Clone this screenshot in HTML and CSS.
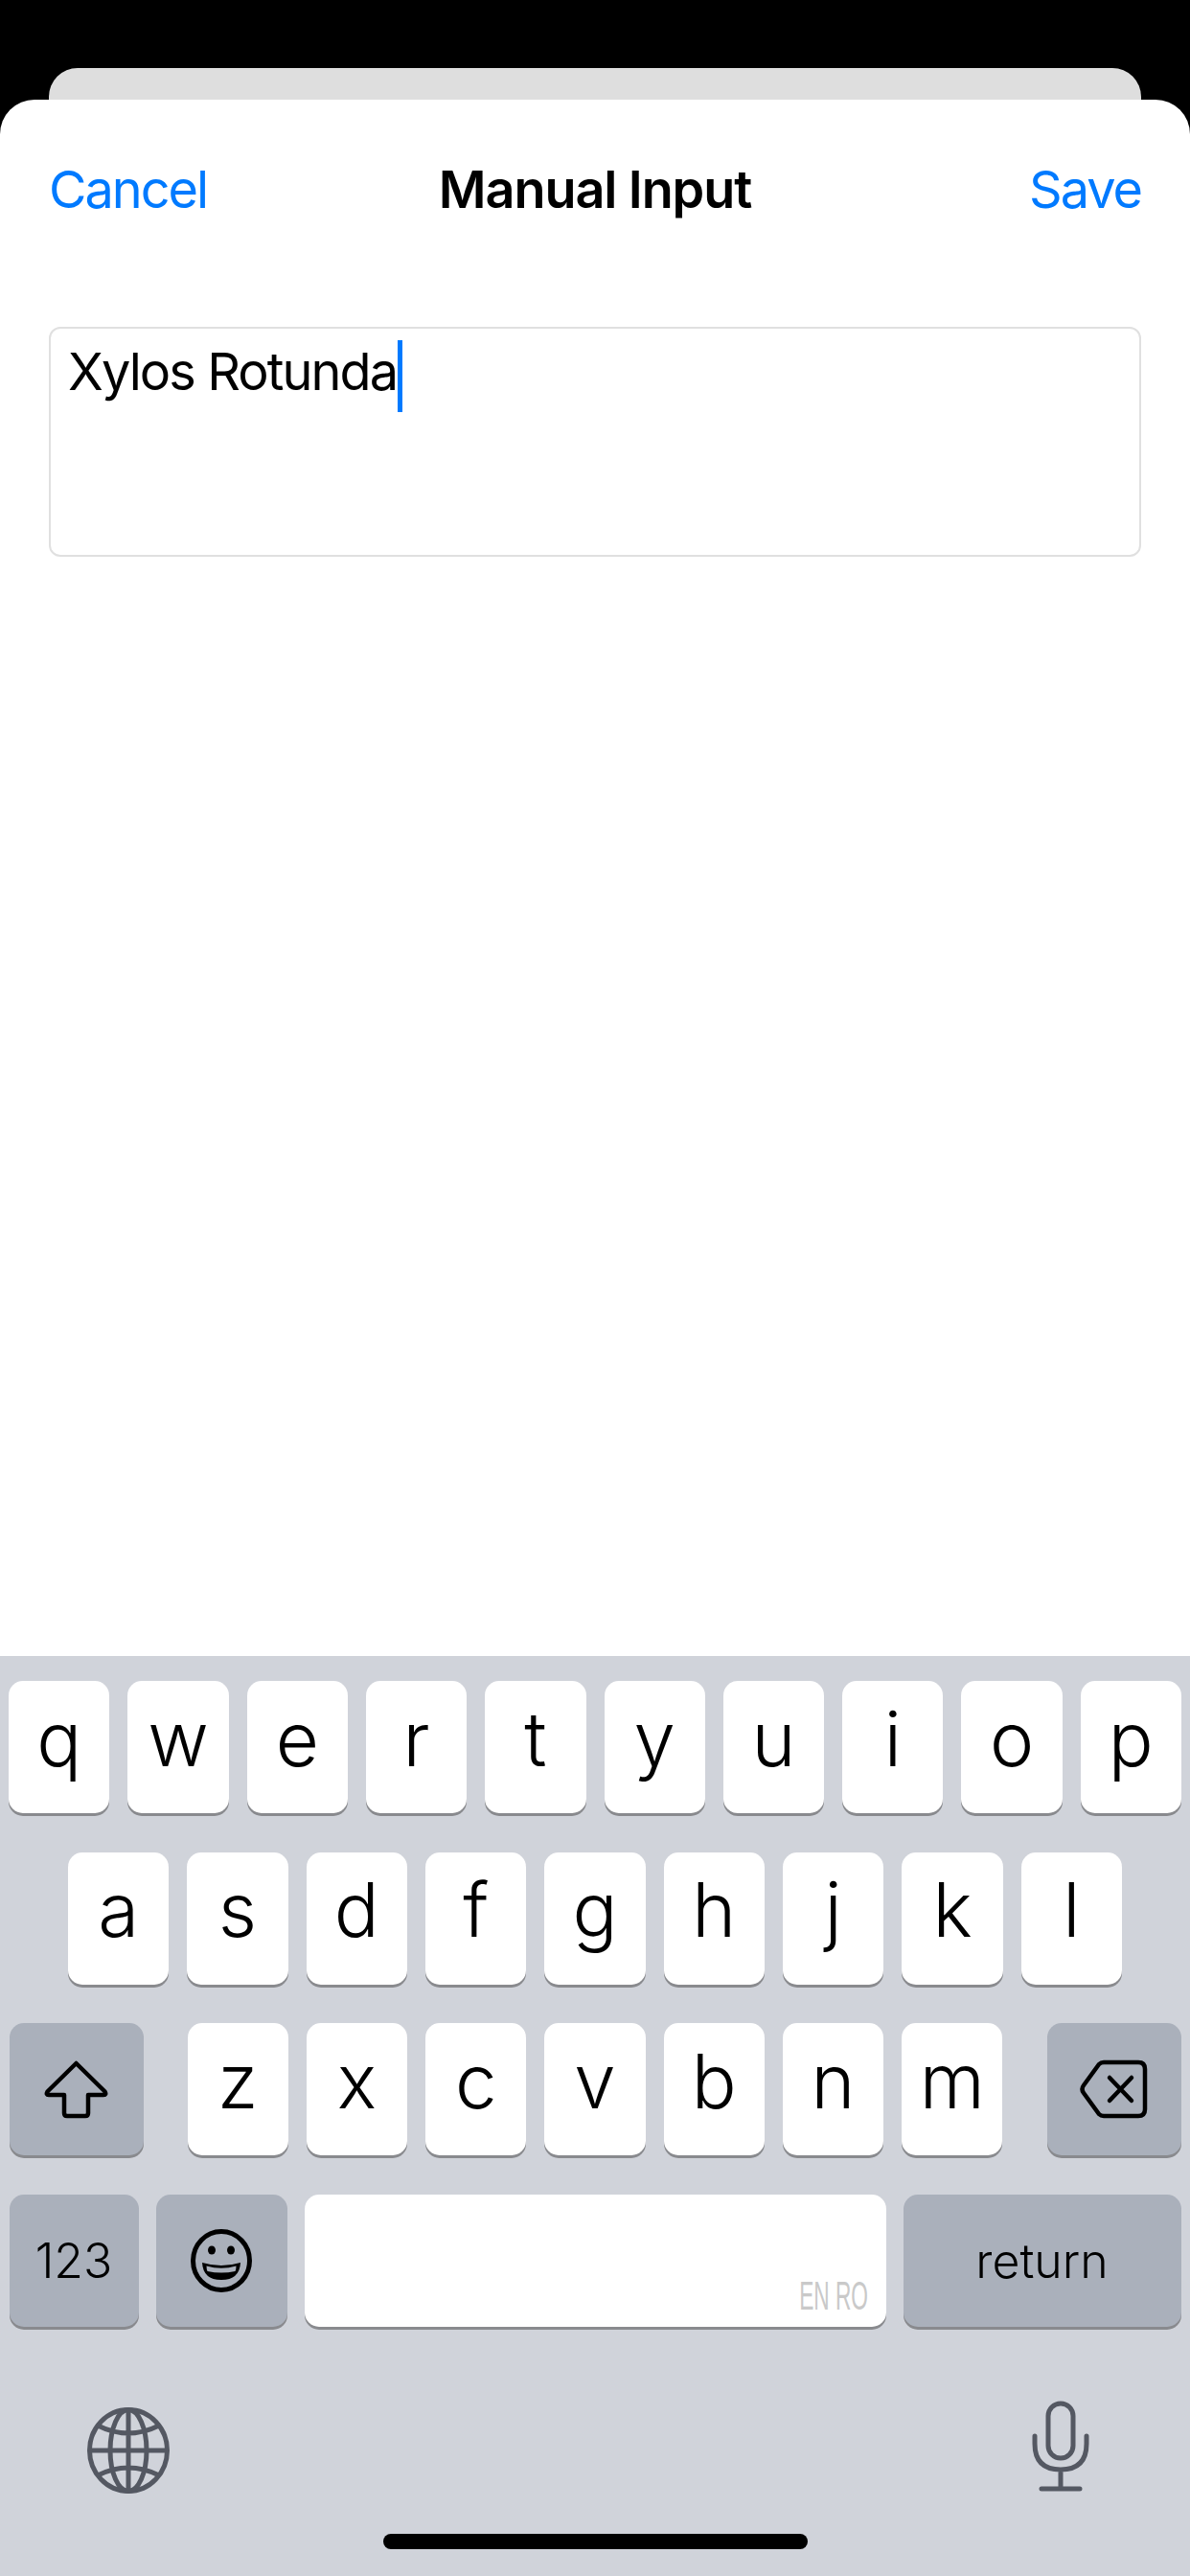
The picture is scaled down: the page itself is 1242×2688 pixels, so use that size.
FILE: index.html
```html
<!DOCTYPE html>
<html lang="en">
<head>
  <meta charset="UTF-8">
  <meta name="viewport" content="width=device-width, initial-scale=1.0">
  <title>Manual Input</title>
  <link rel="stylesheet" href="styles.css">
</head>
<body>

<div class="sheet-behind"></div>

<div class="sheet">
  <div class="nav">
    <a href="#" class="nav-cancel">Cancel</a>
    <h1>Manual Input</h1>
    <a href="#" class="nav-save">Save</a>
  </div>
  <div class="field">Xylos Rotunda<span class="caret"></span></div>
</div>

<div class="keyboard">
  <div class="row row-top">
    <div class="key">q</div><div class="key">w</div><div class="key">e</div><div class="key">r</div><div class="key">t</div>
    <div class="key">y</div><div class="key">u</div><div class="key">i</div><div class="key">o</div><div class="key">p</div>
  </div>
  <div class="row row-home">
    <div class="key">a</div><div class="key">s</div><div class="key">d</div><div class="key">f</div><div class="key">g</div>
    <div class="key">h</div><div class="key">j</div><div class="key">k</div><div class="key">l</div>
  </div>
  <div class="row row-shift">
    <div class="key key-dark">
      <svg width="67" height="61" viewBox="0 0 67 61"><path d="M33.5 3 L63.5 32.5 Q65.5 36 62 36 H46 V55 Q46 58 43 58 H24 Q21 58 21 55 V36 H5 Q1.5 36 3.5 32.5 Z" fill="none" stroke="#000" stroke-width="4.5" stroke-linejoin="round"/></svg>
    </div>
    <div class="letters">
      <div class="key">z</div><div class="key">x</div><div class="key">c</div><div class="key">v</div>
      <div class="key">b</div><div class="key">n</div><div class="key">m</div>
    </div>
    <div class="key key-dark">
      <svg width="71" height="62" viewBox="0 0 71 62"><path d="M25 3 H61 Q68 3 68 10 V52 Q68 59 61 59 H25 Q22 59 20 57 L4 35 Q1 31 4 27 L20 5 Q22 3 25 3 Z" fill="none" stroke="#000" stroke-width="4.5" stroke-linejoin="round"/><path d="M31 19 L54 43 M54 19 L31 43" fill="none" stroke="#000" stroke-width="4.5" stroke-linecap="round"/></svg>
    </div>
  </div>
  <div class="row row-bottom">
    <div class="key key-dark key-123">123</div>
    <div class="key key-dark key-emoji">
      <svg width="64" height="66" viewBox="0 0 64 66">
        <ellipse cx="32" cy="33" rx="29.5" ry="30.5" fill="none" stroke="#000" stroke-width="5"/>
        <ellipse cx="22" cy="22" rx="4" ry="4.5"/>
        <ellipse cx="42" cy="22" rx="4" ry="4.5"/>
        <path d="M12 35 Q32 41 52 35 Q51 53 32 53 Q13 53 12 35 Z"/>
        <path d="M16.5 38.5 Q32 43 47.5 38.5 Q47.5 42 46.5 44 Q32 47 17.5 44 Q16.5 42 16.5 38.5 Z" fill="#aab0bb"/>
      </svg>
    </div>
    <div class="key key-space"><span class="lang">EN RO</span></div>
    <div class="key key-dark key-return">return</div>
  </div>
  <div class="kb-bottom">
    <svg class="globe" width="86" height="90" viewBox="0 0 86 90" fill="none" stroke="#545862" stroke-width="5">
      <ellipse cx="43" cy="45" rx="40.5" ry="42.5"/>
      <ellipse cx="43" cy="45" rx="19" ry="42.5"/>
      <path d="M43 2.5 V87.5 M2.5 45 H83.5 M11 19 Q43 35 75 19 M11 71 Q43 55 75 71"/>
    </svg>
    <svg class="mic" width="60" height="96" viewBox="0 0 60 96" fill="none" stroke="#545862" stroke-width="5" stroke-linecap="round">
      <rect x="17" y="3" width="26" height="57" rx="13"/>
      <path d="M3 37 V45 Q3 72 30 72 Q57 72 57 45 V37 M30 72 V90 M10 92 H50"/>
    </svg>
  </div>
  <div class="home-bar"></div>
</div>

</body>
</html>
```

FILE: styles.css
```css
:root {
  --blue: #007aff;
  --kb-bg: #d0d3da;
  --key-dark: #aab0bb;
  --key-shadow: #898a8e;
}

body {
  font-family: Inter, 'Noto Sans', Arial, sans-serif;
  margin: 0;
  width: 1242px;
  height: 2688px;
  background: #000;
  display: flex;
  flex-direction: column;
  overflow: hidden;
}

.sheet-behind {
  margin: 71px 51px 0;
  height: 33px;
  flex: none;
  background: #dedede;
  border-radius: 30px 30px 0 0;
}

.sheet {
  flex: 1;
  background: #fff;
  border-radius: 36px 36px 0 0;
  padding: 0 51px;
}

.nav {
  display: grid;
  grid-template-columns: 1fr auto 1fr;
  align-items: center;
  padding-top: 63px;
  height: 62px;
  line-height: 62px;
  font-size: 54px;
  letter-spacing: -2px;
}

.nav a {
  color: var(--blue);
  text-decoration: none;
}

.nav h1 {
  margin: 0;
  font-size: 54px;
  font-weight: 600;
  letter-spacing: -1.1px;
  color: #000;
}

.nav-save {
  justify-self: end;
}

.field {
  box-sizing: border-box;
  margin-top: 112px;
  height: 240px;
  border: 2px solid #e0e0e0;
  border-radius: 12px;
  padding: 9px 18px 0;
  font-size: 54px;
  line-height: 72px;
  letter-spacing: -1.9px;
  color: #000;
}

.caret {
  display: inline-block;
  width: 5px;
  height: 75px;
  margin: 3px 0 0 1px;
  vertical-align: top;
  background: var(--blue);
}

.keyboard {
  position: relative;
  flex: none;
  height: 960px;
  padding-top: 26px;
  box-sizing: border-box;
  background: var(--kb-bg);
}

.row {
  height: 138px;
  margin-bottom: 40.5px;
}

.row-top,
.row-home,
.letters {
  display: grid;
  grid-auto-flow: column;
  grid-auto-columns: 1fr;
  gap: 19px;
}

.row-top {
  padding: 0 9px;
}

.row-home {
  padding: 0 71px;
}

.row-shift {
  display: grid;
  grid-template-columns: 140px 1fr 140px;
  gap: 46px;
  padding: 0 9.5px;
}

.row-bottom {
  display: flex;
  gap: 18px;
  padding: 0 9.5px;
}

.key {
  display: flex;
  align-items: center;
  justify-content: center;
  position: relative;
  box-sizing: border-box;
  height: 138px;
  padding-bottom: 18px;
  background: #fff;
  border-radius: 15px;
  box-shadow: 0 3px 0 var(--key-shadow);
  font-size: 78px;
  font-weight: 300;
  color: #000;
}

.key-dark {
  padding-bottom: 0;
  background: var(--key-dark);
}

.key-123 {
  width: 135px;
  flex: none;
  font-size: 50px;
}

.key-emoji {
  width: 137px;
  flex: none;
}

.key-space {
  flex: 1;
}

.key-return {
  width: 290px;
  flex: none;
  font-size: 50px;
}

.lang {
  position: absolute;
  right: 18px;
  bottom: 11px;
  font-family: 'Liberation Sans', sans-serif;
  font-size: 42px;
  line-height: 1;
  color: #c9c9c9;
  transform: scaleX(0.54);
  transform-origin: right center;
}

.kb-bottom {
  display: flex;
  justify-content: space-between;
  align-items: center;
  padding: 0 105px 0 91px;
  margin-top: 76px;
}

.globe {
  margin-top: 8px;
}

.home-bar {
  position: absolute;
  left: 400px;
  top: 916px;
  width: 443px;
  height: 16px;
  border-radius: 8px;
  background: #000;
}
```
